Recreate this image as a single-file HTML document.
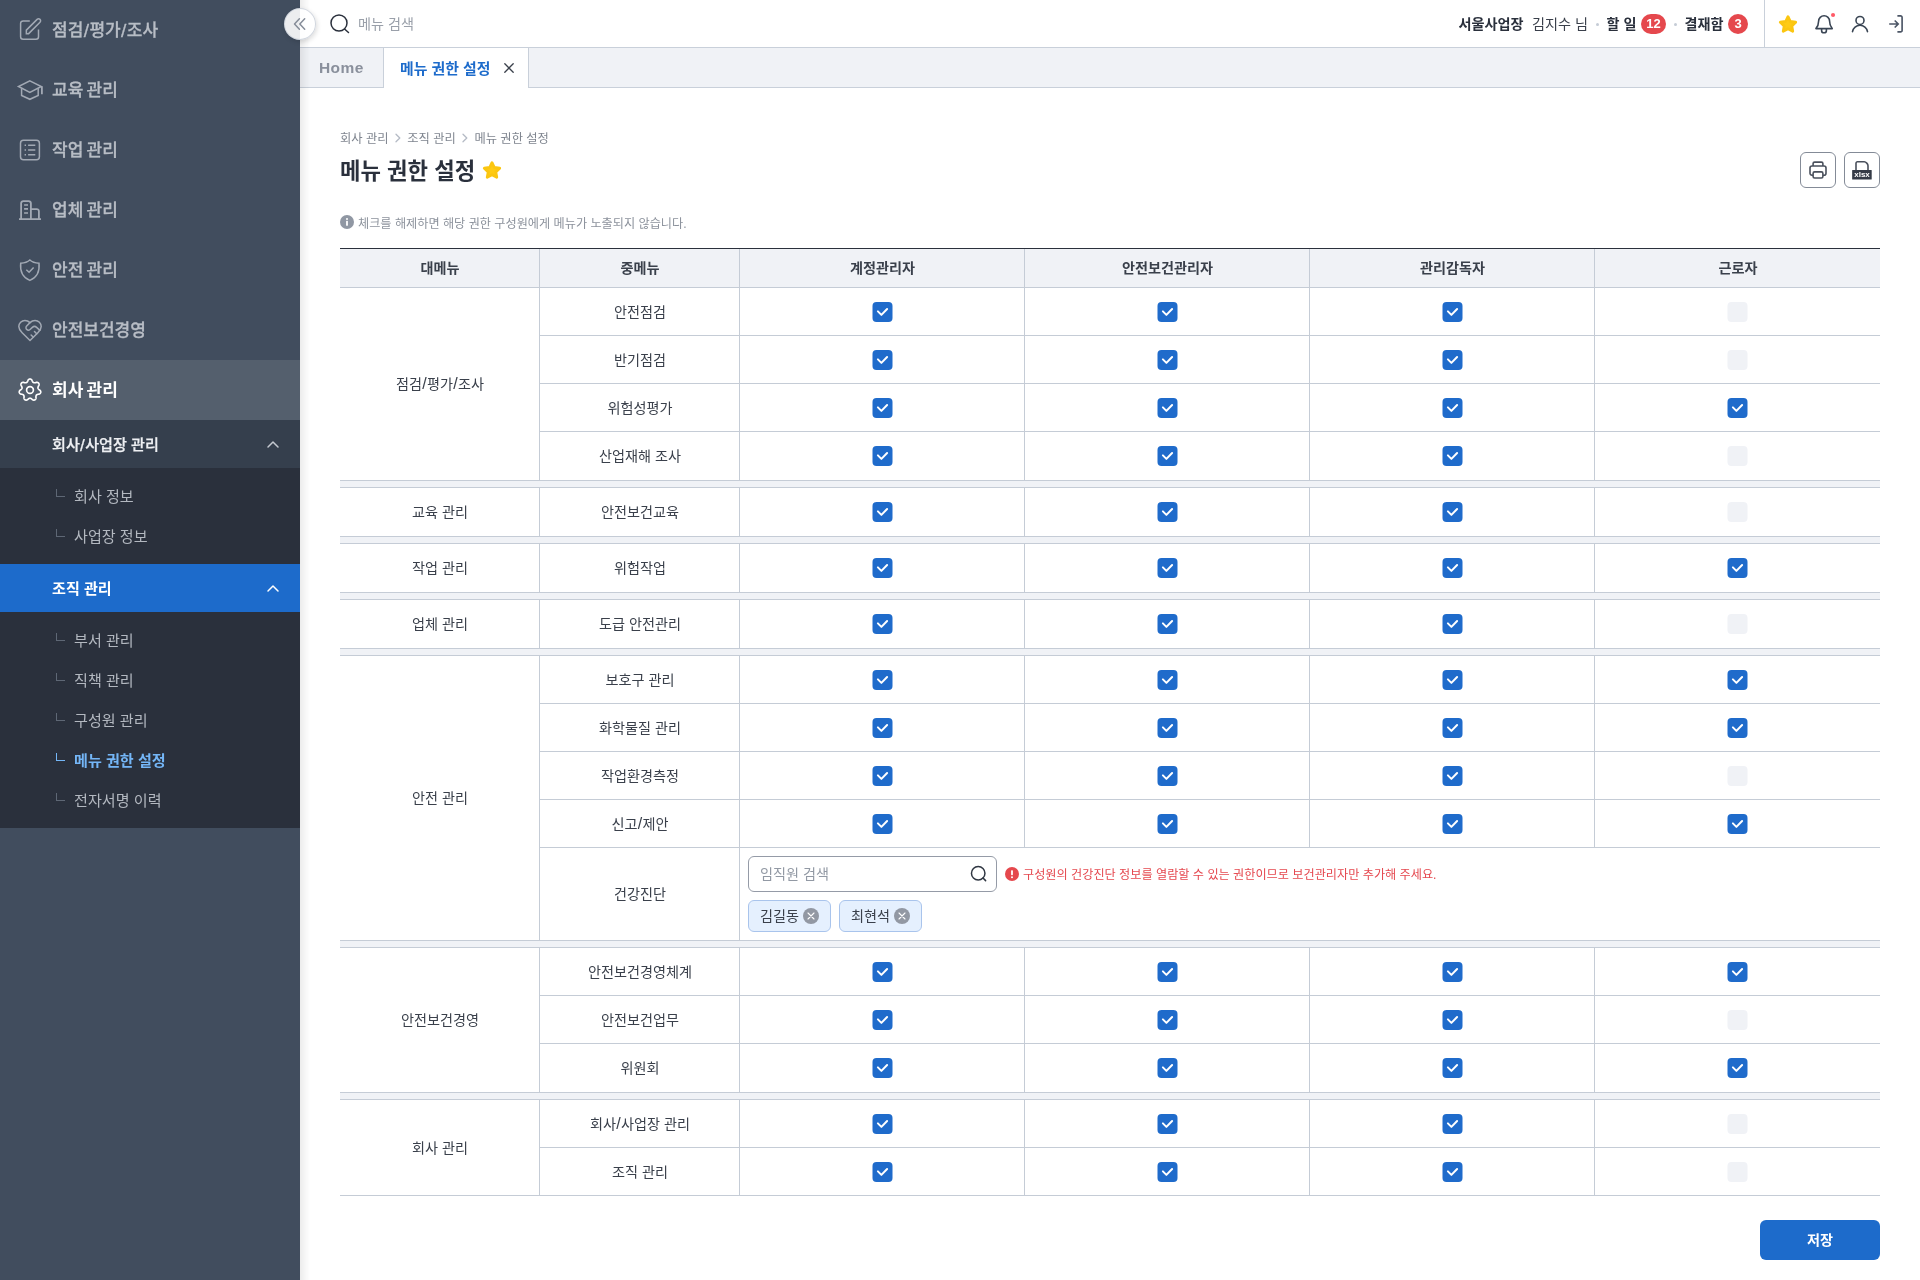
<!DOCTYPE html>
<html lang="ko">
<head>
<meta charset="utf-8">
<title>메뉴 권한 설정</title>
<style>
*{box-sizing:border-box;margin:0;padding:0}
html,body{width:1920px;height:1280px;overflow:hidden;background:#fff}
body{font-family:"Liberation Sans","Noto Sans CJK KR",sans-serif;color:#2A303C;position:relative;-webkit-font-smoothing:antialiased}
#app{position:absolute;left:0;top:0;width:1920px;height:1280px;will-change:transform}
svg{display:block;flex:none;overflow:visible}
/* sidebar */
.side{position:absolute;left:0;top:0;width:300px;height:1280px;background:#414D5E;color:#B8BDC5}
.mi{word-spacing:-1.5px;-webkit-text-stroke:.3px currentColor;height:60px;display:flex;align-items:center;padding-left:18px;padding-bottom:3px;font-size:17px;font-weight:500}
.mi .ic{margin-right:10px;color:#A2A9B4;position:relative;top:1.5px}
.mi.act{background:#545F6D;color:#fff;font-weight:700;-webkit-text-stroke:0}
.mi.act .ic{color:#fff}
.sg{-webkit-text-stroke:.25px currentColor;height:48px;padding-bottom:2px;background:#353F4D;color:#EEF0F3;font-size:15.1px;font-weight:500;display:flex;align-items:center;padding-left:52px;position:relative}
.sg.on{background:#1D6BCB;color:#fff;font-weight:700;-webkit-text-stroke:0}
.sg .chev{position:absolute;left:265px;top:16px;color:#C4C9D0}
.sg.on .chev{color:#fff}
.sl{background:#2A303C;padding:8px 0}
.si{height:40px;padding-bottom:2px;display:flex;align-items:center;padding-left:57px;font-size:15.1px;color:#B3B8C0}
.si i{width:9px;height:8.400px;border-left:1.300px solid #5E6775;border-bottom:1.300px solid #5E6775;margin-right:9px;margin-top:-3.600px;margin-left:-1px;flex:none}
.si.cur{color:#74B6F7;font-weight:700}
.si.cur i{border-color:#74B6F7}
.shade{position:absolute;left:300px;top:0;width:10px;height:1280px;background:linear-gradient(90deg,rgba(0,0,0,.075),rgba(0,0,0,.04) 45%,rgba(0,0,0,0));z-index:5;pointer-events:none}
/* top */
.top{position:absolute;left:300px;top:0;width:1620px;height:48px;border-bottom:1px solid #C9D0DA;background:#fff}
.srch{position:absolute;left:28px;top:12px;display:flex;align-items:center;font-size:14.15px;color:#9AA0AA}
.srch span{margin-left:6px;line-height:24px}
.usr{position:absolute;left:0;top:0;height:47px;width:1464px;font-size:14.15px;white-space:nowrap}
.usr>*{position:absolute;top:0;line-height:49.5px;height:47px}
.usr b{font-weight:700}
.usr .site{left:1158.5px}
.usr .nm{left:1232px;color:#3A404B}
.usr .todo{left:1306.5px}
.usr .appr{left:1384.5px}
.usr .dot{width:3px;height:3px;border-radius:50%;background:#C5CCD6;top:22.5px}
.usr .d1{left:1296px}
.usr .d2{left:1373.5px}
.usr .bd{font-style:normal;background:#E5484D;color:#fff;font-weight:700;font-size:13px;height:20px;line-height:20px;text-align:center;width:20px;border-radius:10px;top:14px;left:1428px}
.usr .bd.w{width:25px;left:1341px}
.vdiv{position:absolute;left:1464px;top:0;width:1px;height:47px;background:#C9D0DA}
.ticons{position:absolute;left:1476px;top:12px;display:flex;gap:12px}
.collapse{position:absolute;left:284px;top:8px;width:32px;height:32px;border-radius:50%;background:rgba(255,255,255,.9);border:1px solid rgba(205,211,220,.9);box-shadow:1px 2px 5px rgba(0,0,0,.14);display:flex;align-items:center;justify-content:center;z-index:10}
/* tabs */
.tabs{position:absolute;left:300px;top:48px;width:1620px;height:40px;background:#F0F2F6;border-bottom:1px solid #C9D0DA;display:flex}
.tab{height:40px;display:flex;align-items:center;font-size:15px;font-weight:700}
.tab.home{width:84px;padding-left:19px;font-size:15.5px;letter-spacing:.4px;padding-top:1px;color:#8A909C;border-right:1px solid #C9D0DA;height:39px}
.tab.cur{width:145px;padding-left:16px;padding-bottom:2px;background:#fff;color:#1D6BCB;border-right:1px solid #C9D0DA;font-size:14.9px}
.tab .tx{margin-left:13px;margin-top:2px}
/* main */
.main{position:absolute;left:300px;top:88px;width:1620px;height:1192px}
.bc{position:absolute;left:40px;top:42px;display:flex;align-items:center;font-size:12.27px;color:#7F858F;line-height:18px}
.bc .sep{margin:-2px 6.4px 0 6.25px}
.ttl{position:absolute;left:40px;top:65.5px;display:flex;align-items:center;font-size:22.25px;font-weight:700;line-height:36px;color:#2A303C}
.ttl .st2{margin-left:4.500px;margin-top:-2.500px}
.btns{position:absolute;left:1500px;top:64px;display:flex;gap:8px}
.ib{width:36px;height:36px;border:1px solid #848B97;border-radius:6px;display:flex;align-items:center;justify-content:center;background:#fff}
.info{position:absolute;left:40px;top:126.5px;display:flex;align-items:center;font-size:12.15px;color:#8C929C;line-height:18px}
.info .inf{margin-right:4px;margin-top:-3px}
.tb{position:absolute;left:40px;top:160px;width:1540px;border-collapse:separate;border-spacing:0;table-layout:fixed;border-top:1px solid #2A303C;font-size:14.15px}
.tb th{height:39px;background:#F0F2F6;border-bottom:1px solid #C5CCD6;border-right:1px solid #C5CCD6;font-weight:700;color:#3A404B;text-align:center;vertical-align:middle;padding:0 0 2px 1px}
.tb th:last-child{border-right:0}
.tb td{height:48px;border-bottom:1px solid #C5CCD6;border-right:1px solid #C5CCD6;text-align:center;vertical-align:middle;color:#3A404B;padding:0 0 0 1px;line-height:20px}
.tb td:last-child{border-right:0}
.tb td.big,.tb tr.last td{border-bottom:0;padding-bottom:1px}
.tb tr.end td,.tb td.big.endb{border-bottom:1px solid #C5CCD6;padding-bottom:0}
.tb tr.gap td{height:8px;background:#F0F2F6;border-right:0;border-top:1px solid #C5CCD6;border-bottom:1px solid #C5CCD6;padding:0;line-height:0}
.tb tr.health td{height:92px}
.cb{display:block;margin:0 auto;position:relative;top:0.5px}
.tb td:last-child{padding-left:0}
.tb td.hc{text-align:left;padding:0 0 0 8px;vertical-align:top}
.hrow{display:flex;align-items:center;margin-top:8px}
.inp{width:249px;height:36px;border:1px solid #959BA7;border-radius:6px;position:relative;background:#fff}
.inp .ph{position:absolute;left:11px;top:0;line-height:34px;color:#9299A4;font-size:14.15px}
.inp .sic{position:absolute;left:220.1px;top:7.36px}
.warn{display:flex;align-items:center;margin-left:8px;color:#E5484F;font-size:12.15px;line-height:18px;padding-top:2px}
.warn .wi{margin-right:4px;margin-top:-2px}
.chips{display:flex;gap:8px;margin-top:8px}
.chip{height:32px;width:83px;border:1px solid #A9C4EC;background:#E5F0FE;border-radius:6px;display:inline-flex;align-items:center;padding:0 0 1px 11px;font-size:14.15px;color:#3A404B}
.chip .cx{margin-left:4px;margin-top:1px}
.save{position:absolute;left:1460px;top:1132px;width:120px;height:40px;background:#1D6BCB;color:#fff;border-radius:6px;font-size:14.15px;font-weight:700;display:flex;align-items:center;justify-content:center;padding-bottom:2px}
.sl2{font-size:1.130em;line-height:0;position:relative;top:.06em;margin:0 .02em}

</style>
</head>
<body>
<div id="app">
<aside class="side">
  <div class="mi"><svg class="ic" width="24" height="24" viewBox="0 0 24 24"><g fill="none" stroke="currentColor" stroke-width="1.500" stroke-linecap="butt" stroke-linejoin="miter"><path d="M11.800 2.900H5.100A2.500 2.500 0 0 0 2.600 5.400V18.700A2.500 2.500 0 0 0 5.100 21.200H18A2.500 2.500 0 0 0 20.500 18.700V11.500"/><path d="M8.350 15.650V12.150L19.100 1.400A2 2 0 0 1 22 4.300L10.650 15.650Z"/></g></svg><span>점검<span class="sl2">/</span>평가<span class="sl2">/</span>조사</span></div>
  <div class="mi"><svg class="ic" width="24" height="24" viewBox="0 0 24 24"><g fill="none" stroke="currentColor" stroke-width="1.500" stroke-linecap="butt" stroke-linejoin="miter"><path d="M11.850 2.800L23.300 8.500L11.850 14.300L0.500 8.500Z"/><path d="M3.600 10.200V17.400L11.850 21.300L20.200 17.400V10.200"/><path d="M23.900 8.600V16.200" stroke-width="1.800"/></g></svg><span>교육 관리</span></div>
  <div class="mi"><svg class="ic" width="24" height="24" viewBox="0 0 24 24"><g fill="none" stroke="currentColor" stroke-width="1.500"><rect x="2.500" y="2.300" width="18.900" height="19.400" rx="3"/><path d="M10.100 7.300H17.300M10.100 12H17.300M10.100 16.700H17.300M6.600 7.300H8M6.600 12H8M6.600 16.700H8" stroke-width="1.600"/></g></svg><span>작업 관리</span></div>
  <div class="mi"><svg class="ic" width="24" height="24" viewBox="0 0 24 24"><g fill="none" stroke="currentColor" stroke-width="1.800"><path d="M1 21.050H23M3.100 21V5.300A2.200 2.200 0 0 1 5.300 3.100H10.700A2.200 2.200 0 0 1 12.900 5.300V21M12.900 11.050H18.700A2.200 2.200 0 0 1 20.900 13.250V21"/><path d="M6.100 7H10M6.100 10.900H10M6.100 15H10" stroke-width="1.600"/></g></svg><span>업체 관리</span></div>
  <div class="mi"><svg class="ic" width="24" height="24" viewBox="0 0 24 24"><g fill="none" stroke="currentColor" stroke-width="1.500" stroke-linejoin="miter"><path d="M11.850 2C9.500 4.200 6.500 5 2.700 5.200C2 12 3 18.800 11.850 22.400C20.700 18.800 21.700 12 21 5.200C17.200 5 14.200 4.200 11.850 2Z"/><path d="M8.300 11.700L11.100 14.300L15.600 9.600" stroke-linecap="butt"/></g></svg><span>안전 관리</span></div>
  <div class="mi"><svg class="ic" width="24" height="24" viewBox="0 0 24 24"><g fill="none" stroke="currentColor" stroke-width="1.340" stroke-linecap="round" stroke-linejoin="round" transform="translate(12 12.470) scale(1.120) translate(-12 -12)"><path d="M19 14c1.490-1.460 3-3.210 3-5.500A5.500 5.500 0 0 0 16.500 3c-1.760 0-3 .5-4.500 2-1.500-1.500-2.740-2-4.500-2A5.500 5.500 0 0 0 2 8.500c0 2.300 1.500 4.050 3 5.500l7 7Z"/><path d="M12 5 9.040 7.960a2.170 2.170 0 0 0 0 3.080c.82.820 2.130.850 3 .070l2.070-1.900a2.820 2.820 0 0 1 3.790 0l2.960 2.660"/><path d="m18 15-2-2"/><path d="m15 18-2-2"/></g></svg><span>안전보건경영</span></div>
  <div class="mi act"><svg class="ic" width="24" height="24" viewBox="0 0 24 24"><g fill="none" stroke="currentColor" stroke-width="1.650" stroke-linejoin="round"><path d="M12.00 1.00L12.25 1.02L12.49 1.06L12.73 1.14L12.97 1.25L13.20 1.39L13.41 1.56L13.62 1.75L13.82 1.98L14.00 2.25L14.14 2.64L14.26 3.03L14.40 3.31L14.54 3.55L14.68 3.76L14.81 3.96L14.95 4.13L15.10 4.28L15.24 4.41L15.40 4.52L15.56 4.61L15.73 4.68L15.91 4.73L16.10 4.77L16.31 4.78L16.53 4.79L16.77 4.77L17.03 4.75L17.30 4.70L17.60 4.64L17.99 4.49L18.38 4.36L18.70 4.33L19.00 4.34L19.28 4.38L19.55 4.45L19.80 4.54L20.03 4.66L20.24 4.80L20.43 4.96L20.60 5.14L20.74 5.34L20.86 5.56L20.95 5.80L21.01 6.05L21.04 6.32L21.05 6.59L21.02 6.88L20.96 7.18L20.86 7.48L20.65 7.83L20.42 8.17L20.29 8.46L20.19 8.71L20.11 8.96L20.04 9.19L19.99 9.40L19.96 9.61L19.95 9.80L19.96 9.99L19.99 10.18L20.05 10.35L20.12 10.53L20.21 10.70L20.33 10.87L20.47 11.05L20.63 11.22L20.81 11.41L21.01 11.60L21.25 11.79L21.60 12.00L21.95 12.22L22.17 12.46L22.35 12.70L22.50 12.94L22.61 13.20L22.70 13.45L22.75 13.70L22.77 13.95L22.76 14.20L22.72 14.45L22.65 14.68L22.55 14.91L22.42 15.13L22.27 15.34L22.08 15.53L21.87 15.70L21.63 15.86L21.36 16.00L21.06 16.11L20.65 16.17L20.24 16.20L19.94 16.27L19.68 16.36L19.43 16.44L19.21 16.53L19.02 16.63L18.84 16.74L18.68 16.85L18.53 16.98L18.41 17.11L18.30 17.26L18.21 17.43L18.14 17.61L18.08 17.81L18.02 18.02L17.98 18.26L17.95 18.51L17.93 18.79L17.93 19.10L17.99 19.51L18.03 19.92L17.98 20.24L17.91 20.53L17.81 20.80L17.68 21.04L17.54 21.27L17.37 21.47L17.19 21.64L16.99 21.79L16.77 21.91L16.54 22.00L16.30 22.07L16.05 22.10L15.79 22.11L15.53 22.08L15.26 22.02L14.98 21.94L14.71 21.81L14.43 21.65L14.14 21.36L13.86 21.06L13.61 20.87L13.38 20.72L13.16 20.58L12.95 20.47L12.75 20.37L12.56 20.30L12.37 20.24L12.18 20.21L12.00 20.20L11.82 20.21L11.63 20.24L11.44 20.30L11.25 20.37L11.05 20.47L10.84 20.58L10.62 20.72L10.39 20.87L10.14 21.06L9.86 21.36L9.57 21.65L9.29 21.81L9.02 21.94L8.74 22.02L8.47 22.08L8.21 22.11L7.95 22.10L7.70 22.07L7.46 22.00L7.23 21.91L7.01 21.79L6.81 21.64L6.63 21.47L6.46 21.27L6.32 21.04L6.19 20.80L6.09 20.53L6.02 20.24L5.97 19.92L6.01 19.51L6.07 19.10L6.07 18.79L6.05 18.51L6.02 18.26L5.98 18.02L5.92 17.81L5.86 17.61L5.79 17.43L5.70 17.26L5.59 17.11L5.47 16.98L5.32 16.85L5.16 16.74L4.98 16.63L4.79 16.53L4.57 16.44L4.32 16.36L4.06 16.27L3.76 16.20L3.35 16.17L2.94 16.11L2.64 16.00L2.37 15.86L2.13 15.70L1.92 15.53L1.73 15.34L1.58 15.13L1.45 14.91L1.35 14.68L1.28 14.45L1.24 14.20L1.23 13.95L1.25 13.70L1.30 13.45L1.39 13.20L1.50 12.94L1.65 12.70L1.83 12.46L2.05 12.22L2.40 12.00L2.75 11.79L2.99 11.60L3.19 11.41L3.37 11.22L3.53 11.05L3.67 10.87L3.79 10.70L3.88 10.53L3.95 10.35L4.01 10.18L4.04 9.99L4.05 9.80L4.04 9.61L4.01 9.40L3.96 9.19L3.89 8.96L3.81 8.71L3.71 8.46L3.58 8.17L3.35 7.83L3.14 7.48L3.04 7.18L2.98 6.88L2.95 6.59L2.96 6.32L2.99 6.05L3.05 5.80L3.14 5.56L3.26 5.34L3.40 5.14L3.57 4.96L3.76 4.80L3.97 4.66L4.20 4.54L4.45 4.45L4.72 4.38L5.00 4.34L5.30 4.33L5.62 4.36L6.01 4.49L6.40 4.64L6.70 4.70L6.97 4.75L7.23 4.77L7.47 4.79L7.69 4.78L7.90 4.77L8.09 4.73L8.27 4.68L8.44 4.61L8.60 4.52L8.76 4.41L8.90 4.28L9.05 4.13L9.19 3.96L9.32 3.76L9.46 3.55L9.60 3.31L9.74 3.03L9.86 2.64L10.00 2.25L10.18 1.98L10.38 1.75L10.59 1.56L10.80 1.39L11.03 1.25L11.27 1.14L11.51 1.06L11.75 1.02Z"/><circle cx="12" cy="12" r="3.400"/></g></svg><span>회사 관리</span></div>
  <div class="sg"><span>회사<span class="sl2">/</span>사업장 관리</span><svg class="chev" width="16" height="16" viewBox="0 0 16 16"><path d="M3 11L8 6l5 5" fill="none" stroke="currentColor" stroke-width="1.500" stroke-linecap="round" stroke-linejoin="round"/></svg></div>
  <div class="sl">
    <div class="si"><i></i><span>회사 정보</span></div>
    <div class="si"><i></i><span>사업장 정보</span></div>
  </div>
  <div class="sg on"><span>조직 관리</span><svg class="chev" width="16" height="16" viewBox="0 0 16 16"><path d="M3 11L8 6l5 5" fill="none" stroke="currentColor" stroke-width="1.500" stroke-linecap="round" stroke-linejoin="round"/></svg></div>
  <div class="sl">
    <div class="si"><i></i><span>부서 관리</span></div>
    <div class="si"><i></i><span>직책 관리</span></div>
    <div class="si"><i></i><span>구성원 관리</span></div>
    <div class="si cur"><i></i><span>메뉴 권한 설정</span></div>
    <div class="si"><i></i><span>전자서명 이력</span></div>
  </div>
</aside>
<div class="shade"></div>
<header class="top">
  <div class="srch"><svg class="" width="24" height="24" viewBox="0 0 24 24"><g fill="none" stroke="#2A303C" stroke-width="1.500" stroke-linecap="round"><circle cx="11" cy="11" r="8"/><path d="M16.800 17.200L20.500 20.500"/></g></svg><span>메뉴 검색</span></div>
  <div class="usr">
    <b class="site">서울사업장</b><span class="nm">김지수 님</span><i class="dot d1"></i>
    <b class="todo">할 일</b><em class="bd w">12</em><i class="dot d2"></i>
    <b class="appr">결재함</b><em class="bd">3</em>
  </div>
  <div class="vdiv"></div>
  <div class="ticons"><svg class="" width="24" height="24" viewBox="0 0 24 24"><path d="M12.00 4.65L14.35 9.51L19.70 10.25L15.80 13.99L16.76 19.30L12.00 16.75L7.24 19.30L8.20 13.99L4.30 10.25L9.65 9.51Z" fill="#FFCB14" stroke="#FBC611" stroke-width="2.800" stroke-linejoin="round"/></svg><svg class="" width="24" height="24" viewBox="0 0 24 24"><g fill="none" stroke="#3A4554" stroke-width="1.600" stroke-linejoin="round"><path d="M3.900 16.600C5.700 14.600 6.600 12.600 6.600 9.300A5.500 5.500 0 0 1 17.600 9.300C17.600 12.600 18.500 14.600 20.200 16.600Z"/><path d="M9.600 16.600V18.400A2.400 2.400 0 0 0 14.400 18.400V16.600"/></g><circle cx="21.050" cy="3.050" r="2.050" fill="#FF5A67"/></svg><svg class="" width="24" height="24" viewBox="0 0 24 24"><g fill="none" stroke="#3A4554" stroke-width="1.600" stroke-linecap="round"><circle cx="12" cy="8.450" r="4"/><path d="M4.500 19.600A7.600 7.600 0 0 1 19.500 19.600"/></g></svg><svg class="" width="24" height="24" viewBox="0 0 24 24"><g fill="none" stroke="#4C5666" stroke-width="1.650" stroke-linejoin="miter"><path d="M5.200 12H14M10.700 8.500L14.200 12L10.700 15.500M13.400 3.900H16.600A1.500 1.500 0 0 1 18.100 5.400V18.400A1.500 1.500 0 0 1 16.600 19.900H13.400"/></g></svg></div>
</header>
<div class="collapse"><svg class="" width="16" height="16" viewBox="0 0 16 16"><path d="M7.400 2.700L2.500 8L7.400 13.300M12.700 2.700L7.800 8L12.700 13.300" fill="none" stroke="#868D99" stroke-width="1.500" stroke-linecap="round" stroke-linejoin="round"/></svg></div>
<nav class="tabs">
  <div class="tab home">Home</div>
  <div class="tab cur"><span>메뉴 권한 설정</span><svg class="tx" width="12" height="12" viewBox="0 0 12 12"><path d="M1.800 1.800l8.400 8.400M10.200 1.800l-8.400 8.400" fill="none" stroke="#3A404B" stroke-width="1.300" stroke-linecap="round"/></svg></div>
</nav>
<main class="main">
  <div class="bc"><span>회사 관리</span><svg class="sep" width="6" height="10" viewBox="0 0 6 10"><path d="M1 1.200l3.800 3.800L1 8.800" fill="none" stroke="#B5BBC5" stroke-width="1.300" stroke-linecap="round" stroke-linejoin="round"/></svg><span>조직 관리</span><svg class="sep" width="6" height="10" viewBox="0 0 6 10"><path d="M1 1.200l3.800 3.800L1 8.800" fill="none" stroke="#B5BBC5" stroke-width="1.300" stroke-linecap="round" stroke-linejoin="round"/></svg><span>메뉴 권한 설정</span></div>
  <h1 class="ttl"><span>메뉴 권한 설정</span><svg class="st2" width="24" height="24" viewBox="0 0 24 24"><path d="M12.00 4.65L14.35 9.51L19.70 10.25L15.80 13.99L16.76 19.30L12.00 16.75L7.24 19.30L8.20 13.99L4.30 10.25L9.65 9.51Z" fill="#FFCB14" stroke="#FBC611" stroke-width="2.800" stroke-linejoin="round"/></svg></h1>
  <div class="btns"><div class="ib"><svg class="" width="24" height="24" viewBox="0 0 24 24"><g fill="none" stroke="#4A505C" stroke-width="1.600" stroke-linejoin="round"><path d="M7.100 8V5.600A1.500 1.500 0 0 1 8.600 4.100H15.400A1.500 1.500 0 0 1 16.900 5.600V8"/><path d="M7.100 17.200H6A2 2 0 0 1 4 15.200V10A2 2 0 0 1 6 8H18A2 2 0 0 1 20 10V15.200A2 2 0 0 1 18 17.200H16.900"/><rect x="7.100" y="13.900" width="9.800" height="6.100" rx="1.500"/></g></svg></div><div class="ib"><svg class="" width="24" height="24" viewBox="0 0 24 24"><path d="M6 12.500V5.200A1.400 1.400 0 0 1 7.400 3.800H14.200C16 3.800 18 6 18 7.800V12.500" fill="none" stroke="#4A505C" stroke-width="1.600" stroke-linejoin="round"/><rect x="2.150" y="11.900" width="19.550" height="9.600" rx=".5" fill="#353B47"/><text x="12" y="19.100" font-family="Liberation Sans, sans-serif" font-size="8" font-weight="700" fill="#fff" text-anchor="middle">xlsx</text></svg></div></div>
  <div class="info"><svg class="inf" width="14" height="14" viewBox="0 0 14 14"><circle cx="7" cy="7" r="7" fill="#9097A3"/><circle cx="7" cy="3.900" r="1" fill="#fff"/><rect x="6.100" y="5.800" width="1.800" height="5" rx=".6" fill="#fff"/></svg><span>체크를 해제하면 해당 권한 구성원에게 메뉴가 노출되지 않습니다.</span></div>
  <table class="tb">
    <colgroup><col style="width:200px"><col style="width:200px"><col style="width:285px"><col style="width:285px"><col style="width:285px"><col style="width:285px"></colgroup>
    <thead><tr><th>대메뉴</th><th>중메뉴</th><th>계정관리자</th><th>안전보건관리자</th><th>관리감독자</th><th>근로자</th></tr></thead>
    <tbody>
<tr><td class="big" rowspan="4">점검<span class="sl2">/</span>평가<span class="sl2">/</span>조사</td><td class="mid">안전점검</td><td><svg class="cb" width="21" height="20" viewBox="0 0 21 20"><rect x=".5" width="20" height="20" rx="4" fill="#1F6BCB"/><path d="M5.900 9.400L9.400 12.900L15.100 7" fill="none" stroke="#fff" stroke-width="2" stroke-linecap="round" stroke-linejoin="round"/></svg></td><td><svg class="cb" width="21" height="20" viewBox="0 0 21 20"><rect x=".5" width="20" height="20" rx="4" fill="#1F6BCB"/><path d="M5.900 9.400L9.400 12.900L15.100 7" fill="none" stroke="#fff" stroke-width="2" stroke-linecap="round" stroke-linejoin="round"/></svg></td><td><svg class="cb" width="21" height="20" viewBox="0 0 21 20"><rect x=".5" width="20" height="20" rx="4" fill="#1F6BCB"/><path d="M5.900 9.400L9.400 12.900L15.100 7" fill="none" stroke="#fff" stroke-width="2" stroke-linecap="round" stroke-linejoin="round"/></svg></td><td><svg class="cb" width="21" height="20" viewBox="0 0 21 20"><rect x=".5" width="20" height="20" rx="4" fill="#F0F2F6"/></svg></td></tr>
<tr><td class="mid">반기점검</td><td><svg class="cb" width="21" height="20" viewBox="0 0 21 20"><rect x=".5" width="20" height="20" rx="4" fill="#1F6BCB"/><path d="M5.900 9.400L9.400 12.900L15.100 7" fill="none" stroke="#fff" stroke-width="2" stroke-linecap="round" stroke-linejoin="round"/></svg></td><td><svg class="cb" width="21" height="20" viewBox="0 0 21 20"><rect x=".5" width="20" height="20" rx="4" fill="#1F6BCB"/><path d="M5.900 9.400L9.400 12.900L15.100 7" fill="none" stroke="#fff" stroke-width="2" stroke-linecap="round" stroke-linejoin="round"/></svg></td><td><svg class="cb" width="21" height="20" viewBox="0 0 21 20"><rect x=".5" width="20" height="20" rx="4" fill="#1F6BCB"/><path d="M5.900 9.400L9.400 12.900L15.100 7" fill="none" stroke="#fff" stroke-width="2" stroke-linecap="round" stroke-linejoin="round"/></svg></td><td><svg class="cb" width="21" height="20" viewBox="0 0 21 20"><rect x=".5" width="20" height="20" rx="4" fill="#F0F2F6"/></svg></td></tr>
<tr><td class="mid">위험성평가</td><td><svg class="cb" width="21" height="20" viewBox="0 0 21 20"><rect x=".5" width="20" height="20" rx="4" fill="#1F6BCB"/><path d="M5.900 9.400L9.400 12.900L15.100 7" fill="none" stroke="#fff" stroke-width="2" stroke-linecap="round" stroke-linejoin="round"/></svg></td><td><svg class="cb" width="21" height="20" viewBox="0 0 21 20"><rect x=".5" width="20" height="20" rx="4" fill="#1F6BCB"/><path d="M5.900 9.400L9.400 12.900L15.100 7" fill="none" stroke="#fff" stroke-width="2" stroke-linecap="round" stroke-linejoin="round"/></svg></td><td><svg class="cb" width="21" height="20" viewBox="0 0 21 20"><rect x=".5" width="20" height="20" rx="4" fill="#1F6BCB"/><path d="M5.900 9.400L9.400 12.900L15.100 7" fill="none" stroke="#fff" stroke-width="2" stroke-linecap="round" stroke-linejoin="round"/></svg></td><td><svg class="cb" width="21" height="20" viewBox="0 0 21 20"><rect x=".5" width="20" height="20" rx="4" fill="#1F6BCB"/><path d="M5.900 9.400L9.400 12.900L15.100 7" fill="none" stroke="#fff" stroke-width="2" stroke-linecap="round" stroke-linejoin="round"/></svg></td></tr>
<tr class="last"><td class="mid">산업재해 조사</td><td><svg class="cb" width="21" height="20" viewBox="0 0 21 20"><rect x=".5" width="20" height="20" rx="4" fill="#1F6BCB"/><path d="M5.900 9.400L9.400 12.900L15.100 7" fill="none" stroke="#fff" stroke-width="2" stroke-linecap="round" stroke-linejoin="round"/></svg></td><td><svg class="cb" width="21" height="20" viewBox="0 0 21 20"><rect x=".5" width="20" height="20" rx="4" fill="#1F6BCB"/><path d="M5.900 9.400L9.400 12.900L15.100 7" fill="none" stroke="#fff" stroke-width="2" stroke-linecap="round" stroke-linejoin="round"/></svg></td><td><svg class="cb" width="21" height="20" viewBox="0 0 21 20"><rect x=".5" width="20" height="20" rx="4" fill="#1F6BCB"/><path d="M5.900 9.400L9.400 12.900L15.100 7" fill="none" stroke="#fff" stroke-width="2" stroke-linecap="round" stroke-linejoin="round"/></svg></td><td><svg class="cb" width="21" height="20" viewBox="0 0 21 20"><rect x=".5" width="20" height="20" rx="4" fill="#F0F2F6"/></svg></td></tr>
<tr class="gap"><td colspan="6"></td></tr>
<tr class="last"><td class="big" rowspan="1">교육 관리</td><td class="mid">안전보건교육</td><td><svg class="cb" width="21" height="20" viewBox="0 0 21 20"><rect x=".5" width="20" height="20" rx="4" fill="#1F6BCB"/><path d="M5.900 9.400L9.400 12.900L15.100 7" fill="none" stroke="#fff" stroke-width="2" stroke-linecap="round" stroke-linejoin="round"/></svg></td><td><svg class="cb" width="21" height="20" viewBox="0 0 21 20"><rect x=".5" width="20" height="20" rx="4" fill="#1F6BCB"/><path d="M5.900 9.400L9.400 12.900L15.100 7" fill="none" stroke="#fff" stroke-width="2" stroke-linecap="round" stroke-linejoin="round"/></svg></td><td><svg class="cb" width="21" height="20" viewBox="0 0 21 20"><rect x=".5" width="20" height="20" rx="4" fill="#1F6BCB"/><path d="M5.900 9.400L9.400 12.900L15.100 7" fill="none" stroke="#fff" stroke-width="2" stroke-linecap="round" stroke-linejoin="round"/></svg></td><td><svg class="cb" width="21" height="20" viewBox="0 0 21 20"><rect x=".5" width="20" height="20" rx="4" fill="#F0F2F6"/></svg></td></tr>
<tr class="gap"><td colspan="6"></td></tr>
<tr class="last"><td class="big" rowspan="1">작업 관리</td><td class="mid">위험작업</td><td><svg class="cb" width="21" height="20" viewBox="0 0 21 20"><rect x=".5" width="20" height="20" rx="4" fill="#1F6BCB"/><path d="M5.900 9.400L9.400 12.900L15.100 7" fill="none" stroke="#fff" stroke-width="2" stroke-linecap="round" stroke-linejoin="round"/></svg></td><td><svg class="cb" width="21" height="20" viewBox="0 0 21 20"><rect x=".5" width="20" height="20" rx="4" fill="#1F6BCB"/><path d="M5.900 9.400L9.400 12.900L15.100 7" fill="none" stroke="#fff" stroke-width="2" stroke-linecap="round" stroke-linejoin="round"/></svg></td><td><svg class="cb" width="21" height="20" viewBox="0 0 21 20"><rect x=".5" width="20" height="20" rx="4" fill="#1F6BCB"/><path d="M5.900 9.400L9.400 12.900L15.100 7" fill="none" stroke="#fff" stroke-width="2" stroke-linecap="round" stroke-linejoin="round"/></svg></td><td><svg class="cb" width="21" height="20" viewBox="0 0 21 20"><rect x=".5" width="20" height="20" rx="4" fill="#1F6BCB"/><path d="M5.900 9.400L9.400 12.900L15.100 7" fill="none" stroke="#fff" stroke-width="2" stroke-linecap="round" stroke-linejoin="round"/></svg></td></tr>
<tr class="gap"><td colspan="6"></td></tr>
<tr class="last"><td class="big" rowspan="1">업체 관리</td><td class="mid">도급 안전관리</td><td><svg class="cb" width="21" height="20" viewBox="0 0 21 20"><rect x=".5" width="20" height="20" rx="4" fill="#1F6BCB"/><path d="M5.900 9.400L9.400 12.900L15.100 7" fill="none" stroke="#fff" stroke-width="2" stroke-linecap="round" stroke-linejoin="round"/></svg></td><td><svg class="cb" width="21" height="20" viewBox="0 0 21 20"><rect x=".5" width="20" height="20" rx="4" fill="#1F6BCB"/><path d="M5.900 9.400L9.400 12.900L15.100 7" fill="none" stroke="#fff" stroke-width="2" stroke-linecap="round" stroke-linejoin="round"/></svg></td><td><svg class="cb" width="21" height="20" viewBox="0 0 21 20"><rect x=".5" width="20" height="20" rx="4" fill="#1F6BCB"/><path d="M5.900 9.400L9.400 12.900L15.100 7" fill="none" stroke="#fff" stroke-width="2" stroke-linecap="round" stroke-linejoin="round"/></svg></td><td><svg class="cb" width="21" height="20" viewBox="0 0 21 20"><rect x=".5" width="20" height="20" rx="4" fill="#F0F2F6"/></svg></td></tr>
<tr class="gap"><td colspan="6"></td></tr>
<tr><td class="big" rowspan="5">안전 관리</td><td class="mid">보호구 관리</td><td><svg class="cb" width="21" height="20" viewBox="0 0 21 20"><rect x=".5" width="20" height="20" rx="4" fill="#1F6BCB"/><path d="M5.900 9.400L9.400 12.900L15.100 7" fill="none" stroke="#fff" stroke-width="2" stroke-linecap="round" stroke-linejoin="round"/></svg></td><td><svg class="cb" width="21" height="20" viewBox="0 0 21 20"><rect x=".5" width="20" height="20" rx="4" fill="#1F6BCB"/><path d="M5.900 9.400L9.400 12.900L15.100 7" fill="none" stroke="#fff" stroke-width="2" stroke-linecap="round" stroke-linejoin="round"/></svg></td><td><svg class="cb" width="21" height="20" viewBox="0 0 21 20"><rect x=".5" width="20" height="20" rx="4" fill="#1F6BCB"/><path d="M5.900 9.400L9.400 12.900L15.100 7" fill="none" stroke="#fff" stroke-width="2" stroke-linecap="round" stroke-linejoin="round"/></svg></td><td><svg class="cb" width="21" height="20" viewBox="0 0 21 20"><rect x=".5" width="20" height="20" rx="4" fill="#1F6BCB"/><path d="M5.900 9.400L9.400 12.900L15.100 7" fill="none" stroke="#fff" stroke-width="2" stroke-linecap="round" stroke-linejoin="round"/></svg></td></tr>
<tr><td class="mid">화학물질 관리</td><td><svg class="cb" width="21" height="20" viewBox="0 0 21 20"><rect x=".5" width="20" height="20" rx="4" fill="#1F6BCB"/><path d="M5.900 9.400L9.400 12.900L15.100 7" fill="none" stroke="#fff" stroke-width="2" stroke-linecap="round" stroke-linejoin="round"/></svg></td><td><svg class="cb" width="21" height="20" viewBox="0 0 21 20"><rect x=".5" width="20" height="20" rx="4" fill="#1F6BCB"/><path d="M5.900 9.400L9.400 12.900L15.100 7" fill="none" stroke="#fff" stroke-width="2" stroke-linecap="round" stroke-linejoin="round"/></svg></td><td><svg class="cb" width="21" height="20" viewBox="0 0 21 20"><rect x=".5" width="20" height="20" rx="4" fill="#1F6BCB"/><path d="M5.900 9.400L9.400 12.900L15.100 7" fill="none" stroke="#fff" stroke-width="2" stroke-linecap="round" stroke-linejoin="round"/></svg></td><td><svg class="cb" width="21" height="20" viewBox="0 0 21 20"><rect x=".5" width="20" height="20" rx="4" fill="#1F6BCB"/><path d="M5.900 9.400L9.400 12.900L15.100 7" fill="none" stroke="#fff" stroke-width="2" stroke-linecap="round" stroke-linejoin="round"/></svg></td></tr>
<tr><td class="mid">작업환경측정</td><td><svg class="cb" width="21" height="20" viewBox="0 0 21 20"><rect x=".5" width="20" height="20" rx="4" fill="#1F6BCB"/><path d="M5.900 9.400L9.400 12.900L15.100 7" fill="none" stroke="#fff" stroke-width="2" stroke-linecap="round" stroke-linejoin="round"/></svg></td><td><svg class="cb" width="21" height="20" viewBox="0 0 21 20"><rect x=".5" width="20" height="20" rx="4" fill="#1F6BCB"/><path d="M5.900 9.400L9.400 12.900L15.100 7" fill="none" stroke="#fff" stroke-width="2" stroke-linecap="round" stroke-linejoin="round"/></svg></td><td><svg class="cb" width="21" height="20" viewBox="0 0 21 20"><rect x=".5" width="20" height="20" rx="4" fill="#1F6BCB"/><path d="M5.900 9.400L9.400 12.900L15.100 7" fill="none" stroke="#fff" stroke-width="2" stroke-linecap="round" stroke-linejoin="round"/></svg></td><td><svg class="cb" width="21" height="20" viewBox="0 0 21 20"><rect x=".5" width="20" height="20" rx="4" fill="#F0F2F6"/></svg></td></tr>
<tr><td class="mid">신고<span class="sl2">/</span>제안</td><td><svg class="cb" width="21" height="20" viewBox="0 0 21 20"><rect x=".5" width="20" height="20" rx="4" fill="#1F6BCB"/><path d="M5.900 9.400L9.400 12.900L15.100 7" fill="none" stroke="#fff" stroke-width="2" stroke-linecap="round" stroke-linejoin="round"/></svg></td><td><svg class="cb" width="21" height="20" viewBox="0 0 21 20"><rect x=".5" width="20" height="20" rx="4" fill="#1F6BCB"/><path d="M5.900 9.400L9.400 12.900L15.100 7" fill="none" stroke="#fff" stroke-width="2" stroke-linecap="round" stroke-linejoin="round"/></svg></td><td><svg class="cb" width="21" height="20" viewBox="0 0 21 20"><rect x=".5" width="20" height="20" rx="4" fill="#1F6BCB"/><path d="M5.900 9.400L9.400 12.900L15.100 7" fill="none" stroke="#fff" stroke-width="2" stroke-linecap="round" stroke-linejoin="round"/></svg></td><td><svg class="cb" width="21" height="20" viewBox="0 0 21 20"><rect x=".5" width="20" height="20" rx="4" fill="#1F6BCB"/><path d="M5.900 9.400L9.400 12.900L15.100 7" fill="none" stroke="#fff" stroke-width="2" stroke-linecap="round" stroke-linejoin="round"/></svg></td></tr>
<tr class="health last"><td class="mid">건강진단</td><td colspan="4" class="hc"><div class="hrow"><div class="inp"><span class="ph">임직원 검색</span><svg class="sic" width="20" height="20" viewBox="0 0 20 20"><g fill="none" stroke="#2F3642" stroke-width="1.500" stroke-linecap="round"><circle cx="9.200" cy="9.200" r="6.750"/><path d="M14 14L16.600 16.600"/></g></svg></div><div class="warn"><svg class="wi" width="14" height="14" viewBox="0 0 14 14"><circle cx="7" cy="7" r="7" fill="#E5484D"/><rect x="6.100" y="3.200" width="1.800" height="5" rx=".6" fill="#fff"/><circle cx="7" cy="10.300" r="1" fill="#fff"/></svg><span>구성원의 건강진단 정보를 열람할 수 있는 권한이므로 보건관리자만 추가해 주세요.</span></div></div><div class="chips"><span class="chip"><span>김길동</span><svg class="cx" width="16" height="16" viewBox="0 0 16 16"><circle cx="8" cy="8" r="8" fill="#9298A3"/><path d="M5 5l6 6M11 5l-6 6" stroke="#fff" stroke-width="1.100" stroke-linecap="round"/></svg></span><span class="chip"><span>최현석</span><svg class="cx" width="16" height="16" viewBox="0 0 16 16"><circle cx="8" cy="8" r="8" fill="#9298A3"/><path d="M5 5l6 6M11 5l-6 6" stroke="#fff" stroke-width="1.100" stroke-linecap="round"/></svg></span></div></td></tr>
<tr class="gap"><td colspan="6"></td></tr>
<tr><td class="big" rowspan="3">안전보건경영</td><td class="mid">안전보건경영체계</td><td><svg class="cb" width="21" height="20" viewBox="0 0 21 20"><rect x=".5" width="20" height="20" rx="4" fill="#1F6BCB"/><path d="M5.900 9.400L9.400 12.900L15.100 7" fill="none" stroke="#fff" stroke-width="2" stroke-linecap="round" stroke-linejoin="round"/></svg></td><td><svg class="cb" width="21" height="20" viewBox="0 0 21 20"><rect x=".5" width="20" height="20" rx="4" fill="#1F6BCB"/><path d="M5.900 9.400L9.400 12.900L15.100 7" fill="none" stroke="#fff" stroke-width="2" stroke-linecap="round" stroke-linejoin="round"/></svg></td><td><svg class="cb" width="21" height="20" viewBox="0 0 21 20"><rect x=".5" width="20" height="20" rx="4" fill="#1F6BCB"/><path d="M5.900 9.400L9.400 12.900L15.100 7" fill="none" stroke="#fff" stroke-width="2" stroke-linecap="round" stroke-linejoin="round"/></svg></td><td><svg class="cb" width="21" height="20" viewBox="0 0 21 20"><rect x=".5" width="20" height="20" rx="4" fill="#1F6BCB"/><path d="M5.900 9.400L9.400 12.900L15.100 7" fill="none" stroke="#fff" stroke-width="2" stroke-linecap="round" stroke-linejoin="round"/></svg></td></tr>
<tr><td class="mid">안전보건업무</td><td><svg class="cb" width="21" height="20" viewBox="0 0 21 20"><rect x=".5" width="20" height="20" rx="4" fill="#1F6BCB"/><path d="M5.900 9.400L9.400 12.900L15.100 7" fill="none" stroke="#fff" stroke-width="2" stroke-linecap="round" stroke-linejoin="round"/></svg></td><td><svg class="cb" width="21" height="20" viewBox="0 0 21 20"><rect x=".5" width="20" height="20" rx="4" fill="#1F6BCB"/><path d="M5.900 9.400L9.400 12.900L15.100 7" fill="none" stroke="#fff" stroke-width="2" stroke-linecap="round" stroke-linejoin="round"/></svg></td><td><svg class="cb" width="21" height="20" viewBox="0 0 21 20"><rect x=".5" width="20" height="20" rx="4" fill="#1F6BCB"/><path d="M5.900 9.400L9.400 12.900L15.100 7" fill="none" stroke="#fff" stroke-width="2" stroke-linecap="round" stroke-linejoin="round"/></svg></td><td><svg class="cb" width="21" height="20" viewBox="0 0 21 20"><rect x=".5" width="20" height="20" rx="4" fill="#F0F2F6"/></svg></td></tr>
<tr class="last"><td class="mid">위원회</td><td><svg class="cb" width="21" height="20" viewBox="0 0 21 20"><rect x=".5" width="20" height="20" rx="4" fill="#1F6BCB"/><path d="M5.900 9.400L9.400 12.900L15.100 7" fill="none" stroke="#fff" stroke-width="2" stroke-linecap="round" stroke-linejoin="round"/></svg></td><td><svg class="cb" width="21" height="20" viewBox="0 0 21 20"><rect x=".5" width="20" height="20" rx="4" fill="#1F6BCB"/><path d="M5.900 9.400L9.400 12.900L15.100 7" fill="none" stroke="#fff" stroke-width="2" stroke-linecap="round" stroke-linejoin="round"/></svg></td><td><svg class="cb" width="21" height="20" viewBox="0 0 21 20"><rect x=".5" width="20" height="20" rx="4" fill="#1F6BCB"/><path d="M5.900 9.400L9.400 12.900L15.100 7" fill="none" stroke="#fff" stroke-width="2" stroke-linecap="round" stroke-linejoin="round"/></svg></td><td><svg class="cb" width="21" height="20" viewBox="0 0 21 20"><rect x=".5" width="20" height="20" rx="4" fill="#1F6BCB"/><path d="M5.900 9.400L9.400 12.900L15.100 7" fill="none" stroke="#fff" stroke-width="2" stroke-linecap="round" stroke-linejoin="round"/></svg></td></tr>
<tr class="gap"><td colspan="6"></td></tr>
<tr><td class="big endb" rowspan="2">회사 관리</td><td class="mid">회사<span class="sl2">/</span>사업장 관리</td><td><svg class="cb" width="21" height="20" viewBox="0 0 21 20"><rect x=".5" width="20" height="20" rx="4" fill="#1F6BCB"/><path d="M5.900 9.400L9.400 12.900L15.100 7" fill="none" stroke="#fff" stroke-width="2" stroke-linecap="round" stroke-linejoin="round"/></svg></td><td><svg class="cb" width="21" height="20" viewBox="0 0 21 20"><rect x=".5" width="20" height="20" rx="4" fill="#1F6BCB"/><path d="M5.900 9.400L9.400 12.900L15.100 7" fill="none" stroke="#fff" stroke-width="2" stroke-linecap="round" stroke-linejoin="round"/></svg></td><td><svg class="cb" width="21" height="20" viewBox="0 0 21 20"><rect x=".5" width="20" height="20" rx="4" fill="#1F6BCB"/><path d="M5.900 9.400L9.400 12.900L15.100 7" fill="none" stroke="#fff" stroke-width="2" stroke-linecap="round" stroke-linejoin="round"/></svg></td><td><svg class="cb" width="21" height="20" viewBox="0 0 21 20"><rect x=".5" width="20" height="20" rx="4" fill="#F0F2F6"/></svg></td></tr>
<tr class="last end"><td class="mid">조직 관리</td><td><svg class="cb" width="21" height="20" viewBox="0 0 21 20"><rect x=".5" width="20" height="20" rx="4" fill="#1F6BCB"/><path d="M5.900 9.400L9.400 12.900L15.100 7" fill="none" stroke="#fff" stroke-width="2" stroke-linecap="round" stroke-linejoin="round"/></svg></td><td><svg class="cb" width="21" height="20" viewBox="0 0 21 20"><rect x=".5" width="20" height="20" rx="4" fill="#1F6BCB"/><path d="M5.900 9.400L9.400 12.900L15.100 7" fill="none" stroke="#fff" stroke-width="2" stroke-linecap="round" stroke-linejoin="round"/></svg></td><td><svg class="cb" width="21" height="20" viewBox="0 0 21 20"><rect x=".5" width="20" height="20" rx="4" fill="#1F6BCB"/><path d="M5.900 9.400L9.400 12.900L15.100 7" fill="none" stroke="#fff" stroke-width="2" stroke-linecap="round" stroke-linejoin="round"/></svg></td><td><svg class="cb" width="21" height="20" viewBox="0 0 21 20"><rect x=".5" width="20" height="20" rx="4" fill="#F0F2F6"/></svg></td></tr>
    </tbody>
  </table>
  <div class="save">저장</div>
</main>
</div>
</body>
</html>
